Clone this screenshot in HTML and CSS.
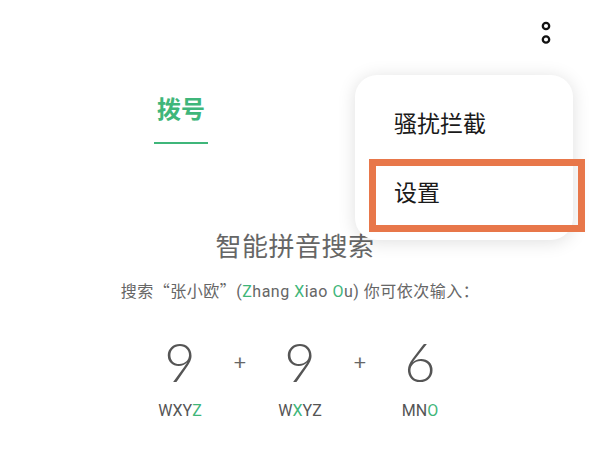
FILE: index.html
```html
<!DOCTYPE html>
<html lang="zh-CN">
<head>
<meta charset="utf-8">
<title>拨号</title>
<link rel="stylesheet" href="styles.css">
</head>
<body>
<div class="page">
  <div class="topbar">
    <svg class="more" width="10" height="24" viewBox="0 0 10 24" aria-hidden="true">
      <circle cx="5" cy="5" r="3.2" fill="none" stroke="#111" stroke-width="2.3"/>
      <circle cx="5" cy="18.5" r="3.2" fill="none" stroke="#111" stroke-width="2.3"/>
    </svg>
  </div>

  <div class="tabs">
    <div class="tab active">
      <span class="tab-label">拨号</span>
      <span class="tab-line"></span>
    </div>
  </div>

  <div class="guide">
    <h1 class="title">智能拼音搜索</h1>
    <p class="hint">搜索<span class="cjk">“张小欧”</span>(<em class="g">Z</em>hang <em class="g">X</em>iao <em class="g">O</em>u) 你可依次输入：</p>

    <div class="keys">
      <span class="digit">9</span>
      <span class="plus">+</span>
      <span class="digit">9</span>
      <span class="plus">+</span>
      <span class="digit">6</span>
      <span class="letters">WXY<em class="g">Z</em></span>
      <span></span>
      <span class="letters">W<em class="g">X</em>YZ</span>
      <span></span>
      <span class="letters">MN<em class="g">O</em></span>
    </div>
  </div>

  <div class="menu">
    <div class="menu-item">骚扰拦截</div>
    <div class="menu-item">设置</div>
  </div>
  <div class="highlight"></div>
</div>
</body>
</html>
```

FILE: styles.css
```css
html, body {
  margin: 0;
  padding: 0;
  background: #ffffff;
}

body {
  font-family: "Noto Sans CJK SC", "Noto Sans", sans-serif;
  color: #333;
}

.page {
  position: relative;
  width: 600px;
  height: 450px;
  overflow: hidden;
}

.topbar {
  height: 60px;
  display: flex;
  justify-content: flex-end;
  align-items: flex-start;
  padding: 21px 49px 0 0;
  box-sizing: border-box;
}

.more {
  display: block;
}

.tabs {
  display: flex;
  padding: 0 60px;
  margin-top: 36px;
}

.tab {
  width: 242px;
  display: flex;
  flex-direction: column;
  align-items: center;
}

.tab-label {
  font-size: 24px;
  line-height: 24px;
  font-weight: 700;
  color: #3fb67a;
}

.tab-line {
  display: block;
  width: 54px;
  height: 2px;
  margin-top: 22px;
  background: #3fb67a;
}

.guide {
  display: flex;
  flex-direction: column;
  align-items: center;
}

.title {
  margin: 88px 0 0 0;
  padding-right: 10px;
  font-size: 26px;
  line-height: 26px;
  font-weight: 400;
  color: #666;
  letter-spacing: 0.5px;
}

.hint {
  margin: 24px 0 0 0;
  font-family: Roboto, "Noto Sans CJK SC", sans-serif;
  font-size: 16px;
  line-height: 16px;
  letter-spacing: 0.5px;
  color: #666;
}

.cjk {
  font-family: "Noto Sans CJK SC", sans-serif;
}

.g {
  font-style: normal;
  color: #3fb67a;
}

.keys {
  margin-top: 35px;
  display: grid;
  grid-template-columns: repeat(5, 60px);
  justify-items: center;
  align-items: center;
}

.digit {
  font-family: Lato, Roboto, sans-serif;
  font-weight: 300;
  font-size: 54px;
  line-height: 54px;
  color: #555;
}

.plus {
  font-family: Lato, Roboto, sans-serif;
  font-weight: 400;
  font-size: 22px;
  line-height: 54px;
  color: #666;
}

.letters {
  margin-top: 14px;
  font-family: Roboto, sans-serif;
  font-size: 16px;
  line-height: 16px;
  color: #555;
  white-space: nowrap;
}

.menu {
  position: absolute;
  left: 355px;
  top: 75px;
  width: 218px;
  height: 165px;
  box-sizing: border-box;
  padding-top: 12px;
  background: #fff;
  border-radius: 22px;
  box-shadow: 0 2px 18px rgba(0, 0, 0, 0.13);
}

.menu-item {
  height: 69px;
  display: flex;
  align-items: center;
  padding-left: 39px;
  font-size: 23px;
  color: #1a1a1a;
}

.highlight {
  position: absolute;
  left: 369px;
  top: 159px;
  width: 216px;
  height: 73px;
  box-sizing: border-box;
  border: 7px solid #e8774a;
}
```
